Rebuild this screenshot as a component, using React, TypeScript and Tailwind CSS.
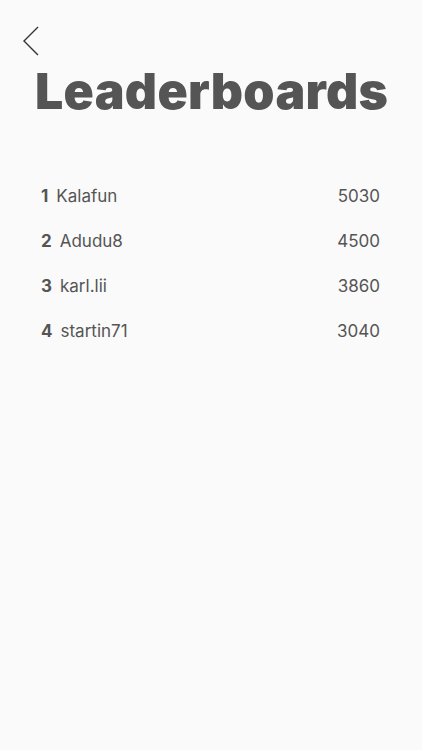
const players = [
  { rank: 1, name: "Kalafun", score: 5030 },
  { rank: 2, name: "Adudu8", score: 4500 },
  { rank: 3, name: "karl.lii", score: 3860 },
  { rank: 4, name: "startin71", score: 3040 },
];

export default function App() {
  return (
    <div
      className="h-[750px] w-full bg-[#fafafa] text-[#555555]"
      style={{ fontFamily: "Inter, 'Noto Sans', sans-serif" }}
    >
      {/* back button */}
      <div className="px-[22px] pt-[26px]">
        <svg width="18" height="30" viewBox="0 0 18 30" fill="none">
          <path d="M16 1 L2 15 L16 29" stroke="#333" strokeWidth="1.4" />
        </svg>
      </div>

      <h1 className="mt-[7px] pl-[35px] text-[50px] font-black leading-[56px] tracking-[0.3px]">
        Leaderboards
      </h1>

      <ul className="mt-[69px] flex flex-col gap-[27px] pl-[41px] pr-[42px]">
        {players.map((p) => (
          <li key={p.rank} className="flex h-[18px] items-center justify-between text-[17px]">
            <div className="flex items-center gap-[8px]">
              <span className="font-bold">{p.rank}</span>
              <span>{p.name}</span>
            </div>
            <span>{p.score}</span>
          </li>
        ))}
      </ul>
    </div>
  );
}
